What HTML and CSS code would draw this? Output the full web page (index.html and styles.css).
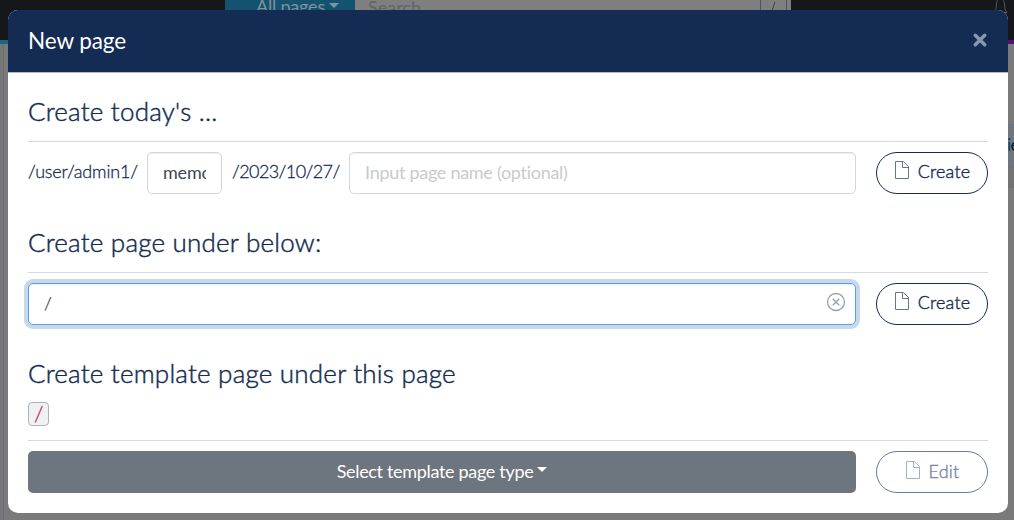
FILE: index.html
```html
<!DOCTYPE html>
<html lang="en">
<head>
<meta charset="utf-8">
<title>New page</title>
<link rel="stylesheet" href="styles.css">
</head>
<body>
<div class="page">
  <div class="navbar">
    <div class="scope"><span>All pages</span><i class="caret"></i></div>
    <div class="search"><span class="search-label">Search</span><span class="slash"><svg width="23" height="18"><path d="M10 12 15 -3" stroke="#3c4248" fill="none"/></svg></span></div>
    <svg class="bell" width="16" height="18" viewBox="0 0 16 18"><path d="M1 12.500C3.500 10 3 8 3.500 4C4 0 5 -1 7.500 -1S11 0 11.500 4C12 8 11.500 10 14 12.500Z" fill="none" stroke="#525a63"/></svg>
  </div>
  <div class="rainbow"></div>
  <div class="content"><div class="rail"></div><div class="side"><div class="side-item"><b>i</b>e</div><div class="side-shade"></div></div></div>
</div>
<div class="modal">
  <div class="modal-header">
    <h5 class="modal-title">New page</h5>
    <svg class="close" width="16" height="16" viewBox="0 0 16 16"><path d="M3.300 3.300 12.700 12.700M12.700 3.300 3.300 12.700" stroke="#8996ad" stroke-width="3.600" stroke-linecap="round"/></svg>
  </div>
  <div class="modal-body">
    <section class="block">
      <h3 class="heading">Create today's ...</h3>
      <div class="row">
        <div class="fields">
          <span class="path p-user">/user/admin1/</span>
          <div class="input memo"><span class="clip">memo</span></div>
          <span class="path p-date">/2023/10/27/</span>
          <div class="input grow placeholder"><span>Input page name (optional)</span></div>
        </div>
        <button class="btn"><svg class="file" width="14" height="18" viewBox="0 0 14 18"><path d="M.5 .5H8.500L13.500 5.500V17.500H.5ZM7.500 .5V6.500H13.500" fill="none" stroke="currentColor"/></svg><span>Create</span></button>
      </div>
    </section>
    <section class="block">
      <h3 class="heading">Create page under below:</h3>
      <div class="row">
        <div class="fields">
          <div class="input grow focus"><span>/</span>
            <svg class="clear" width="20" height="20" viewBox="0 0 20 20"><circle cx="10" cy="10" r="8.500" fill="none" stroke="#98a1ac" stroke-width="1.300"/><path d="M6.800 6.800 13.200 13.200M13.200 6.800 6.800 13.200" stroke="#98a1ac" stroke-width="1.400"/></svg>
          </div>
        </div>
        <button class="btn"><svg class="file" width="14" height="18" viewBox="0 0 14 18"><path d="M.5 .5H8.500L13.500 5.500V17.500H.5ZM7.500 .5V6.500H13.500" fill="none" stroke="currentColor"/></svg><span>Create</span></button>
      </div>
    </section>
    <section class="block template">
      <h3 class="heading">Create template page under this page</h3>
      <code class="code"><span>/</span></code>
      <div class="row">
        <div class="select"><span>Select template page type</span><i class="caret"></i></div>
        <button class="btn disabled"><svg class="file" width="14" height="18" viewBox="0 0 14 18"><path d="M.5 .5H8.500L13.500 5.500V17.500H.5ZM7.500 .5V6.500H13.500" fill="none" stroke="currentColor"/></svg><span>Edit</span></button>
      </div>
    </section>
  </div>
</div>
</body>
</html>
```
FILE: styles.css
```css
* { box-sizing: border-box; }
body { margin: 0; width: 1014px; height: 520px; overflow: hidden; background: #7a7a7a; font-family: Lato, "Liberation Sans", sans-serif; font-size: 18px; line-height: 27px; color: #142b54; }
.page { height: 520px; }
.navbar { display: flex; height: 40px; padding-left: 225px; background: #15171a; overflow: hidden; }
.scope { display: flex; width: 130px; padding-left: 31px; margin-top: -7px; background: #13536f; color: #80929b; }
.scope span { letter-spacing: -.2px; }
.scope .caret { margin: 10px 0 0 4px; }
.search { display: flex; justify-content: space-between; width: 436px; background: #7f7f7f; color: #626466; }
.search-label { margin: -6px 0 0 13px; font-size: 18px; }
.slash { width: 27px; margin-right: 4px; border: solid #4c5660; border-width: 0 1px; }
.bell { margin-left: 202px; }
.rainbow { height: 4px; background: linear-gradient(90deg, #176783, #551078); }
.content { display: flex; justify-content: space-between; height: 476px; }
.rail { width: 4px; background: #74767a; border-right: 1px solid #6d6e70; }
.side { width: 8px; padding-top: 80px; overflow: hidden; }
.side-item { height: 42px; padding: 6px 0 0 1px; border: solid #68758b; border-width: 1px 0; background: #6f7680; color: #15171a; white-space: nowrap; letter-spacing: -.9px; }
.side-item b { color: #084c80; font-weight: 400; }
.side-shade { height: 22px; background: #737373; }
.modal { position: absolute; top: 10px; left: 8px; width: 1000px; height: 503px; border-radius: 10px; overflow: hidden; background: #fff; }
.modal-header { display: flex; justify-content: space-between; align-items: center; height: 63px; padding: 0 20px; background: #142b54; border-bottom: 1px solid #aebbc4; }
.modal-title { margin: 0; font-size: 22.500px; font-weight: 400; line-height: 30px; letter-spacing: -.1px; color: #fff; }
.close { margin-bottom: 3px; }
.modal-body { padding: 19px 20px 20px; }
.block { height: 131px; }
.heading { height: 50px; margin: 0; padding-top: 4px; font-size: 26px; font-weight: 300; line-height: 31px; letter-spacing: .21px; border-bottom: 1px solid #d7dae2; color: #132c50; -webkit-text-stroke: .45px #132c50; }
.row { display: flex; gap: 20px; padding-top: 10px; }
.fields { display: flex; flex: 1; gap: 10px; }
.path { height: 42px; line-height: 39px; white-space: nowrap; font-weight: 300; -webkit-text-stroke: .3px currentColor; }
.p-user { width: 109px; letter-spacing: -.2px; }
.p-date { width: 107px; letter-spacing: -.6px; }
.input { display: flex; align-items: center; height: 42px; padding: 0 15px 1px; border: 1px solid #d4d7de; border-radius: 5px; background: #fff; box-shadow: inset 0 1px 1px rgba(20,43,84,.08); color: #40474f; white-space: nowrap; }
.memo { width: 75px; }
.clip { width: 43px; overflow: hidden; letter-spacing: -.2px; }
.grow { flex: 1; }
.placeholder { color: #c9cacc; letter-spacing: -.28px; }
.focus { justify-content: space-between; padding-right: 9px; border-color: #57a0e5; box-shadow: 0 0 0 4px #c7d8ea, inset 0 1px 1px rgba(20,43,84,.08); }
.focus span { font-weight: 300; -webkit-text-stroke: .25px currentColor; }
.clear { margin-bottom: 3px; }
.btn { display: flex; align-items: center; justify-content: center; gap: 9px; width: 112px; height: 42px; padding: 0 0 3px 1px; border: 1px solid #142b54; border-radius: 21px; background: #fff; color: #142b54; font: 300 18px/27px Lato, sans-serif; letter-spacing: .2px; -webkit-text-stroke: .4px currentColor; }
.file { margin-bottom: 3px; opacity: .65; }
.disabled { border-color: #677b9d; color: #7486a4; padding-bottom: 2px; }
.disabled span { margin-top: 1px; }
.template .heading { height: 48px; border: 0; }
.code { display: block; width: 21px; height: 24px; margin-bottom: 14px; padding-left: 5px; border: 1px solid #aab3bc; border-radius: 4px; background: #f0f1f3; color: #bd0c49; font: 300 22px/21px Lato, monospace; -webkit-text-stroke: .2px currentColor; }
.code span { display: inline-block; }
.template .row { border-top: 1px solid #d7dae2; }
.select { display: flex; flex: 1; align-items: center; justify-content: center; height: 42px; padding-bottom: 2px; border-radius: 5px; background: #6d757e; color: #fff; letter-spacing: -.32px; }
.caret { width: 0; height: 0; margin-left: 4px; border: solid transparent; border-width: 5px 5px 0; border-top-color: currentColor; }
.select .caret { margin-bottom: 3px; }
```
